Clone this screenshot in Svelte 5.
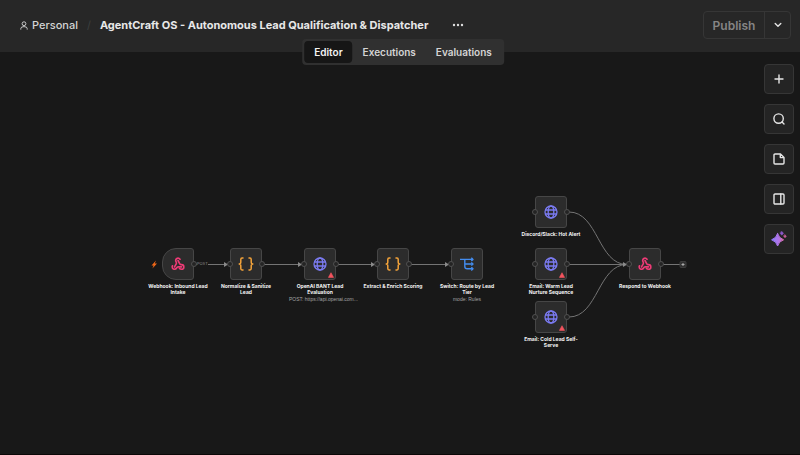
<script>
    let activeTab = 'Editor';
    const tabs = ['Editor', 'Executions', 'Evaluations'];
    const tools = ['Add node', 'Search', 'Add note', 'Toggle panel', 'Assistant'];

    // node positions are canvas coordinates, top left corner of the box
    const nodes = [
        { x: 162, y: 196, icon: 'webhook', label: 'Webhook: Inbound Lead Intake', trigger: true },
        { x: 230, y: 196, icon: 'code', label: 'Normalize & Sanitize Lead' },
        { x: 304, y: 196, icon: 'globe', label: 'OpenAI BANT Lead Evaluation', sub: 'POST: https://api.openai.com...', warn: true },
        { x: 377, y: 196, icon: 'code', label: 'Extract & Enrich Scoring' },
        { x: 451, y: 196, icon: 'switch', label: 'Switch: Route by Lead Tier', sub: 'mode: Rules', last: true },
        { x: 535, y: 144, icon: 'globe', label: 'Discord/Slack: Hot Alert' },
        { x: 535, y: 196, icon: 'globe', label: 'Email: Warm Lead Nurture Sequence', warn: true },
        { x: 535, y: 249, icon: 'globe', label: 'Email: Cold Lead Self-Serve', warn: true },
        { x: 629, y: 196, icon: 'webhook', label: 'Respond to Webhook' },
    ];

    const edges = [
        'M194 212.5H228',
        'M262 212.5H302',
        'M336 212.5H375',
        'M409 212.5H449',
        'M569 160C598 160 598 212.5 627 212.5',
        'M569 212.5H627',
        'M569 265C598 265 598 212.5 627 212.5',
        'M663 212.5H680',
    ];
    const arrows = [228, 302, 375, 449, 627];
</script>

<div class="page">
    <header>
        <a class="project" href="#personal">
            <svg width="8" height="9" viewBox="0 0 8 9" fill="none" stroke="#c8c8c8">
                <circle cx="4" cy="2.7" r="1.9" />
                <path d="M.8 8.6V7.6Q.8 5.6 4 5.6T7.2 7.6V8.6" />
            </svg>
            Personal
        </a>
        <span class="slash">/</span>
        <h1>AgentCraft OS - Autonomous Lead Qualification &amp; Dispatcher</h1>
        <button class="more" aria-label="More actions">
            <svg width="12" height="4" viewBox="0 0 12 4" fill="#dedede">
                <circle cx="2" cy="2" r="1.2" /><circle cx="6" cy="2" r="1.2" /><circle cx="10" cy="2" r="1.2" />
            </svg>
        </button>
        <div class="publish">
            <button>Publish</button>
            <button class="arrow" aria-label="Publish options">
                <svg width="8" height="6" viewBox="0 0 8 6" fill="none" stroke="#e4e4e4" stroke-width="1.4" stroke-linecap="round" stroke-linejoin="round">
                    <path d="M1.2 1.5L4 4.3L6.8 1.5" />
                </svg>
            </button>
        </div>
        <nav class="tabs">
            {#each tabs as tab}
                <button class:active={activeTab === tab} on:click={() => (activeTab = tab)}>{tab}</button>
            {/each}
        </nav>
    </header>

    <main>
        <svg class="edges" fill="none" stroke="#747474">
            {#each edges as d}
                <path {d} />
            {/each}
            {#each arrows as x}
                <path d="M{x - 4} 210L{x} 212.5L{x - 4} 215Z" fill="#8a8a8a" stroke="none" />
            {/each}
            <path d="M156 208.5L151.5 213.5H153.6L152.4 216.5L157 211.5H154.8Z" fill="#f26818" stroke="none" />
            <rect x="680" y="209.5" width="6" height="6" rx="1" fill="#303030" stroke="#3c3c3c" />
            <path d="M681.5 212.5H684.5M683 211V214" stroke="#aaa" />
        </svg>
        <span class="method">POST</span>

        {#each nodes as node}
            <div class="node" style="left: {node.x}px; top: {node.y}px">
                <button class="box" class:trigger={node.trigger} aria-label={node.label}>
                    {#if node.icon === 'webhook'}
                        <svg width="14" height="14" viewBox="0 0 24 24" fill="none" stroke="#ed3b76" stroke-width="2.8" stroke-linecap="round" stroke-linejoin="round">
                            <path d="M18 16.98h-5.99c-1.1 0-1.95.94-2.48 1.9A4 4 0 0 1 2 17c.01-.7.2-1.4.57-2" />
                            <path d="m6 17 3.13-5.78c.53-.97.1-2.18-.5-3.1a4 4 0 1 1 6.89-4.06" />
                            <path d="m12 6 3.13 5.73C15.66 12.7 16.9 13 18 13a4 4 0 0 1 0 8c-1.5 0-2.7-.6-3.5-1.5" />
                        </svg>
                    {:else if node.icon === 'code'}
                        <svg width="16" height="14" viewBox="0 0 16 14" fill="none" stroke="#f3a33a" stroke-width="1.5" stroke-linecap="round" stroke-linejoin="round">
                            <path d="M5 1H4Q2.8 1 2.8 2.4V5Q2.8 7 1.2 7Q2.8 7 2.8 9V11.6Q2.8 13 4 13H5" />
                            <path d="M11 1H12Q13.2 1 13.2 2.4V5Q13.2 7 14.8 7Q13.2 7 13.2 9V11.6Q13.2 13 12 13H11" />
                        </svg>
                    {:else if node.icon === 'globe'}
                        <svg width="14" height="14" viewBox="0 0 14 14" fill="none" stroke="#7b7bf2" stroke-width="1.3">
                            <circle cx="7" cy="7" r="6" />
                            <ellipse cx="7" cy="7" rx="2.8" ry="6" />
                            <path d="M1.3 5H12.7M1.3 9H12.7" />
                        </svg>
                    {:else}
                        <svg width="14" height="14" viewBox="0 0 14 14" fill="none" stroke="#438df0" stroke-width="1.4" stroke-linejoin="round">
                            <path d="M0 2.4H13M4.8 2.4V9.5Q4.8 11.8 7.2 11.8H13M5 7H13" />
                            <path d="M11.3 .8L13 2.4L11.3 4M11.3 5.4L13 7L11.3 8.6M11.3 10.2L13 11.8L11.3 13.4" />
                        </svg>
                    {/if}
                </button>
                {#if !node.trigger}<i class="port in"></i>{/if}
                {#if !node.last}<i class="port out"></i>{/if}
                {#if node.warn}
                    <svg class="warn" width="6" height="6" viewBox="0 0 6 6">
                        <path d="M3 .7L5.6 5.4H.4Z" fill="#f4545e" stroke="#f4545e" stroke-width=".6" stroke-linejoin="round" />
                    </svg>
                {/if}
                <div class="caption">
                    <strong>{node.label}</strong>
                    {#if node.sub}<small>{node.sub}</small>{/if}
                </div>
            </div>
        {/each}

        <aside>
            {#each tools as tool, i}
                <button aria-label={tool}>
                    <svg width="16" height="16" viewBox="0 0 16 16" fill="none" stroke="#e6e6e6" stroke-width="1.4" stroke-linecap="round" stroke-linejoin="round">
                        {#if i === 0}
                            <path d="M8 4V12M4 8H12" />
                        {:else if i === 1}
                            <circle cx="7.6" cy="7.6" r="4.7" /><path d="M11 11L13 13" />
                        {:else if i === 2}
                            <path d="M9.5 3H4Q3 3 3 4V12Q3 13 4 13H12Q13 13 13 12V6.5ZM9.3 3.2V6.6H12.8" />
                        {:else if i === 3}
                            <rect x="3" y="3" width="10" height="10" rx="1" /><path d="M9.8 3V13" />
                        {:else}
                            <linearGradient id="spark" x1="0" x2="1">
                                <stop offset="0" stop-color="#8f7cff" /><stop offset=".6" stop-color="#b174e6" /><stop offset="1" stop-color="#de6cab" />
                            </linearGradient>
                            <path d="M6.6 2.6Q7.8 7.2 12.6 8.8Q7.8 10.4 6.6 15Q5.4 10.4 .6 8.8Q5.4 7.2 6.6 2.6Z" fill="url(#spark)" stroke="url(#spark)" stroke-width="1" />
                            <path d="M10.8 .4L12.5 2.3L10.8 4.2L9.1 2.3Z" fill="#8c58c8" stroke="#8c58c8" stroke-width=".6" />
                            <path d="M14 3.8L15.3 5.3L14 6.8L12.7 5.3Z" fill="#cf609f" stroke="#cf609f" stroke-width=".6" />
                        {/if}
                    </svg>
                </button>
            {/each}
        </aside>
    </main>
</div>

<style>
    :global(body) {
        background: #181818;
    }

    .page {
        display: flex;
        flex-direction: column;
        box-sizing: border-box;
        min-height: 100vh;
        border-bottom: 1px solid #0b0707;
        background: #181818;
        color: #e8e8e8;
        font-family: Inter, "Liberation Sans", sans-serif;
    }

    button {
        display: flex;
        align-items: center;
        justify-content: center;
        padding: 0;
        border: 0;
        background: none;
        color: inherit;
        font-family: inherit;
        cursor: pointer;
    }

    header {
        position: relative;
        display: flex;
        align-items: center;
        box-sizing: border-box;
        height: 52px;
        padding: 0 9px 2px 20px;
        background: #272727;
    }

    .project {
        display: flex;
        align-items: center;
        gap: 4px;
        color: #d4d4d4;
        font-size: 11px;
        font-weight: 500;
        text-decoration: none;
    }

    .slash {
        margin: 0 9px;
        color: #3b3f3f;
        font-size: 11px;
    }

    h1 {
        margin: 0;
        font-size: 11px;
        font-weight: 700;
        white-space: nowrap;
    }

    .more {
        margin-left: 24px;
        height: 20px;
    }

    .publish {
        display: flex;
        margin-left: auto;
        border: 1px solid #363636;
        border-radius: 4px;
    }

    .publish button {
        width: 60px;
        height: 26px;
        color: #858585;
        font-size: 12px;
        font-weight: 600;
    }

    .publish .arrow {
        width: 26px;
        border-left: 1px solid #363636;
    }

    .tabs {
        position: absolute;
        z-index: 1;
        top: 39px;
        left: 50%;
        display: flex;
        padding: 2px;
        border-radius: 4px;
        background: #303030;
        transform: translateX(-50%);
        margin-left: 3px;
    }

    .tabs button {
        height: 22px;
        padding: 0 10px;
        border-radius: 4px;
        color: #d4d4d4;
        font-size: 10px;
        font-weight: 600;
    }

    .tabs .active {
        background: #161616;
        color: #f4f4f4;
    }

    main {
        position: relative;
        flex: 1;
    }

    .edges {
        position: absolute;
        width: 100%;
        height: 100%;
    }

    .method {
        position: absolute;
        top: 209px;
        left: 197px;
        background: #181818;
        color: #8a8a8a;
        font-size: 4px;
        line-height: 6px;
    }

    .node {
        position: absolute;
        width: 32px;
    }

    .box {
        box-sizing: border-box;
        width: 32px;
        height: 32px;
        border: 1px solid #464646;
        border-radius: 3px;
        background: #2c2c2c;
    }

    .trigger {
        border-radius: 14px 3px 3px 14px;
    }

    .port {
        position: absolute;
        top: 13px;
        box-sizing: border-box;
        width: 6px;
        height: 6px;
        border: 1px solid #505050;
        border-radius: 50%;
        background: #242424;
    }

    .in {
        left: -3px;
    }

    .out {
        right: -3px;
    }

    .warn {
        position: absolute;
        top: 24px;
        right: 2px;
    }

    .caption {
        display: flex;
        flex-direction: column;
        width: 62px;
        margin: 3px -15px 0;
        text-align: center;
    }

    .caption strong {
        color: #f4f4f4;
        font-size: 5px;
        font-weight: 700;
        line-height: 6px;
    }

    .caption small {
        margin-top: 1px;
        color: #a4a4a4;
        font-family: "Liberation Sans", sans-serif;
        font-size: 5px;
        line-height: 6px;
        white-space: nowrap;
    }

    aside {
        display: flex;
        flex-direction: column;
        align-items: flex-end;
        gap: 10px;
        padding: 12px 6px;
    }

    aside button {
        position: relative;
        box-sizing: border-box;
        width: 30px;
        height: 30px;
        border: 1px solid #363636;
        border-radius: 4px;
        background: #242424;
    }
</style>
